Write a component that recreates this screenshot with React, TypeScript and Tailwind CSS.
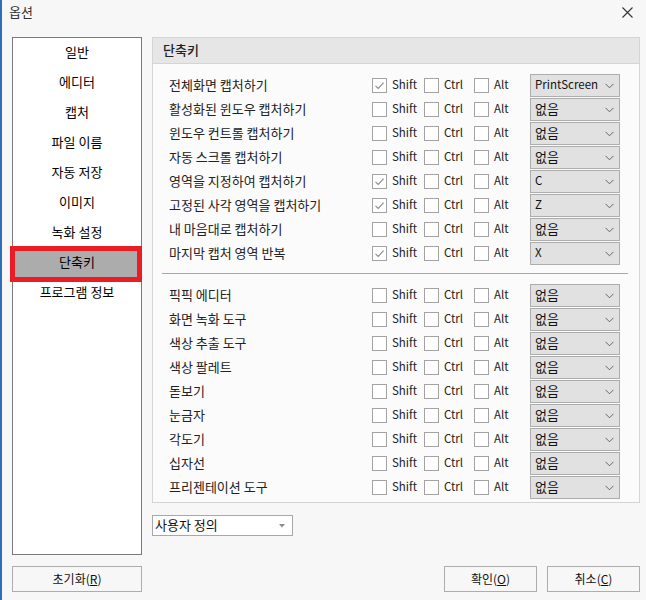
import React from "react";

const menu = ["일반", "에디터", "캡처", "파일 이름", "자동 저장", "이미지", "녹화 설정", "단축키", "프로그램 정보"];

type Row = { label: string; shift: boolean; key: string };

const captureRows: Row[] = [
  { label: "전체화면 캡처하기", shift: true, key: "PrintScreen" },
  { label: "활성화된 윈도우 캡처하기", shift: false, key: "없음" },
  { label: "윈도우 컨트롤 캡처하기", shift: false, key: "없음" },
  { label: "자동 스크롤 캡처하기", shift: false, key: "없음" },
  { label: "영역을 지정하여 캡처하기", shift: true, key: "C" },
  { label: "고정된 사각 영역을 캡처하기", shift: true, key: "Z" },
  { label: "내 마음대로 캡처하기", shift: false, key: "없음" },
  { label: "마지막 캡처 영역 반복", shift: true, key: "X" },
];

const toolRows: Row[] = [
  "픽픽 에디터",
  "화면 녹화 도구",
  "색상 추출 도구",
  "색상 팔레트",
  "돋보기",
  "눈금자",
  "각도기",
  "십자선",
  "프리젠테이션 도구",
].map((label) => ({ label, shift: false, key: "없음" }));

function CheckBox({ checked, label, width }: { checked: boolean; label: string; width: string }) {
  return (
    <div className={`flex items-center gap-[5px] ${width}`}>
      <div className="flex size-[15px] items-center justify-center border border-[#a3a3a3] bg-white">
        {checked && (
          <svg width="11" height="11" viewBox="0 0 11 11">
            <path d="M1.5 5.8 L4.2 8.4 L9.6 2.6" fill="none" stroke="#8c8c8c" strokeWidth="1.1" />
          </svg>
        )}
      </div>
      <span className="pb-px text-[11.5px] text-[#222]">{label}</span>
    </div>
  );
}

function KeyRow({ row }: { row: Row }) {
  return (
    <div className="flex h-[24px] items-start pl-[7px]">
      <div className="flex h-[23px] w-[203px] items-center pb-[2px] text-[13px] text-[#222]">{row.label}</div>
      <div className="flex h-[23px] items-center">
        <CheckBox checked={row.shift} label="Shift" width="w-[52px]" />
        <CheckBox checked={false} label="Ctrl" width="w-[50px]" />
        <CheckBox checked={false} label="Alt" width="w-[56px]" />
      </div>
      <div className="flex h-[23px] w-[90px] items-center justify-between border border-[#adadad] bg-[#e1e1e1] pl-[4px] pr-[5px]">
        <span className={row.key === "없음" ? "pb-px text-[13px] text-[#111]" : "pb-px text-[11.5px] text-[#111]"}>{row.key}</span>
        <svg width="9" height="6" viewBox="0 0 9 6">
          <path d="M0.5 0.8 L4.5 4.8 L8.5 0.8" fill="none" stroke="#666" strokeWidth="1" />
        </svg>
      </div>
    </div>
  );
}

function Button({ children, width }: { children: React.ReactNode; width: string }) {
  return (
    <div className={`flex h-[26px] items-center justify-center border border-[#adadad] bg-[#f7f7f7] text-[12px] text-[#111] ${width}`}>
      {children}
    </div>
  );
}

export default function App() {
  return (
    <div className="flex h-[600px] w-[646px] flex-col border-l-2 border-[#2f6db5] bg-[#f7f7f7] font-['Noto_Sans_CJK_KR',sans-serif]">
      <div className="flex h-[37px] items-start justify-between pl-[7px] pr-[13px] pt-[2px]">
        <span className="text-[13px] text-[#333]">옵션</span>
        <svg width="11" height="11" viewBox="0 0 11 11" className="mt-[5px]">
          <path d="M0.5 0.5 L10.5 10.5 M10.5 0.5 L0.5 10.5" stroke="#333" strokeWidth="1.1" />
        </svg>
      </div>

      <div className="flex gap-[10px] pl-[10px]">
        <div className="flex h-[518px] w-[130px] flex-col border border-[#7a7a7a] bg-white">
          {menu.map((item) => {
            const active = item === "단축키";
            return (
              <div key={item} className="relative flex h-[30px] items-center justify-center pb-[2px]">
                {active && (
                  <>
                    <div className="absolute -left-[3px] -right-[1px] -top-[2px] -bottom-[4px] border-[5px] border-[#ea1d25]" />
                    <div className="absolute left-[2px] right-[4px] top-[3px] bottom-[1px] bg-[#acacac]" />
                  </>
                )}
                <span className="relative text-[13px] text-black">{item}</span>
              </div>
            );
          })}
        </div>

        <div className="flex flex-col">
          <div className="flex h-[466px] w-[488px] flex-col border border-[#d5d5d5] bg-[#fbfbfb]">
            <div className="flex h-[26px] items-center border-b border-[#d5d5d5] bg-[#e6e6e6] pb-px pl-[10px] text-[13px] font-medium text-[#222]">
              단축키
            </div>
            <div className="flex flex-col pl-[9px] pr-[11px] pt-[10px]">
              {captureRows.map((row) => (
                <KeyRow key={row.label} row={row} />
              ))}
              <div className="mb-[10px] mt-[7px] h-px bg-[#a8a8a8]" />
              {toolRows.map((row) => (
                <KeyRow key={row.label} row={row} />
              ))}
            </div>
          </div>

          <div className="mt-[12px] flex h-[21px] w-[141px] items-center justify-between border border-[#a8a8a8] bg-white pl-[2px] pr-[7px]">
            <span className="pb-px text-[13px] text-[#111]">사용자 정의</span>
            <svg width="6" height="4" viewBox="0 0 6 4">
              <path d="M0 0 L6 0 L3 3.5 Z" fill="#8a8a8a" />
            </svg>
          </div>
        </div>
      </div>

      <div className="mt-[11px] flex items-center pl-[10px] pr-[6px]">
        <Button width="w-[130px]">
          초기화(<span className="underline">R</span>)
        </Button>
        <div className="flex-1" />
        <div className="flex gap-[10px]">
          <Button width="w-[93px]">
            확인(<span className="underline">O</span>)
          </Button>
          <Button width="w-[93px]">
            취소(<span className="underline">C</span>)
          </Button>
        </div>
      </div>
    </div>
  );
}
